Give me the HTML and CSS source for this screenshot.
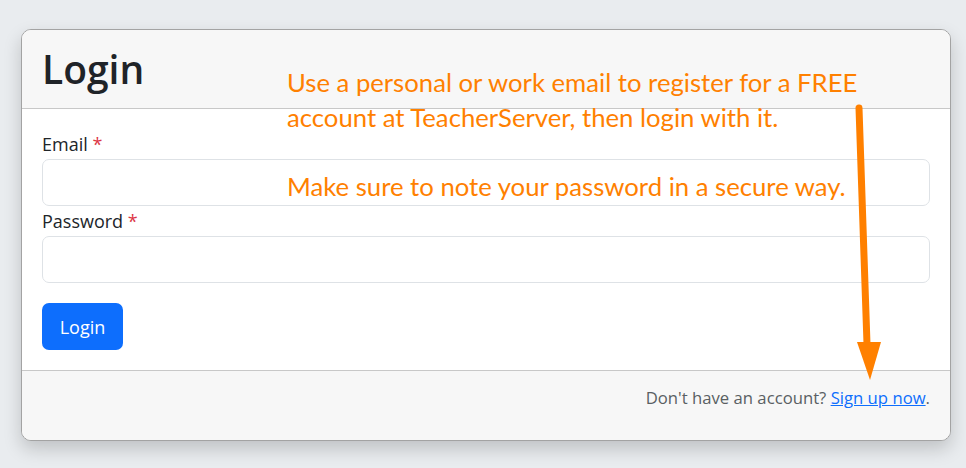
FILE: index.html
```html
<!DOCTYPE html>
<html>
<head>
<meta charset="utf-8">
<link rel="stylesheet" href="styles.css">
</head>
<body>
<div class="page">
  <div class="card">
    <div class="card-header"><h1>Login</h1></div>
    <div class="card-body">
      <label class="label">Email <span class="req">*</span></label>
      <div class="input"></div>
      <label class="label">Password <span class="req">*</span></label>
      <div class="input"></div>
      <button class="btn">Login</button>
    </div>
    <div class="card-footer">Don't have an account? <a href="#">Sign up now</a>.</div>
  </div>
</div>
<div class="note">Use a personal or work email to register for a FREE<br>account at TeacherServer, then login with it.<br><br>Make sure to note your password in a secure way.</div>
<svg class="arrow" viewBox="0 0 966 468" width="966" height="468">
  <line x1="859" y1="108" x2="867" y2="344" stroke="#ff8000" stroke-width="7" stroke-linecap="round"/>
  <polygon points="857,342 881,342 870,380" fill="#ff8000"/>
</svg>
</body>
</html>
```
FILE: styles.css
```css
html, body { margin: 0; padding: 0; }
body {
  background: #e9ecef;
  font-family: "Open Sans", "Noto Sans", sans-serif;
  color: #212529;
  width: 966px;
  height: 468px;
  overflow: hidden;
  position: relative;
}
.page { padding: 29px 15px 0 21px; }
.card {
  width: 928px;
  border: 1px solid #a3a3a3;
  border-radius: 10px;
  background: #fff;
  overflow: hidden;
  box-shadow: 0 8px 18px rgba(0,0,0,0.18);
}
.card-header {
  background: #f7f7f7;
  border-bottom: 1px solid #c8c8c8;
  padding: 10px 20px;
  height: 58px;
}
.card-header h1 {
  margin: 0;
  font-size: 39px;
  line-height: 58px;
  font-weight: 600;
  color: #1f2328;
}
.card-body { padding: 20px; }
.label {
  display: block;
  font-size: 18px;
  line-height: 30px;
  height: 30px;
}
.req { color: #dc3545; }
.input {
  height: 45px;
  border: 1px solid #dee2e6;
  border-radius: 7px;
  background: #fff;
}
.btn {
  margin-top: 20px;
  height: 47px;
  width: 81px;
  border: none;
  border-radius: 7px;
  background: #0d6efd;
  color: #fff;
  font-family: inherit;
  font-size: 18px;
  padding: 0;
  display: block;
}
.card-footer {
  background: #f7f7f7;
  border-top: 1px solid #c8c8c8;
  padding: 14px 20px 29px;
  line-height: 26px;
  font-size: 16.7px;
  color: #5a5f63;
  text-align: right;
}
.card-footer a { color: #0d6efd; text-decoration: underline; }
.note {
  position: absolute;
  left: 287px;
  top: 65px;
  font-family: Lato, "Open Sans", sans-serif;
  font-size: 25.7px;
  line-height: 34.7px;
  color: #ff8000;
  white-space: nowrap;
}
.arrow { position: absolute; left: 0; top: 0; }
```
